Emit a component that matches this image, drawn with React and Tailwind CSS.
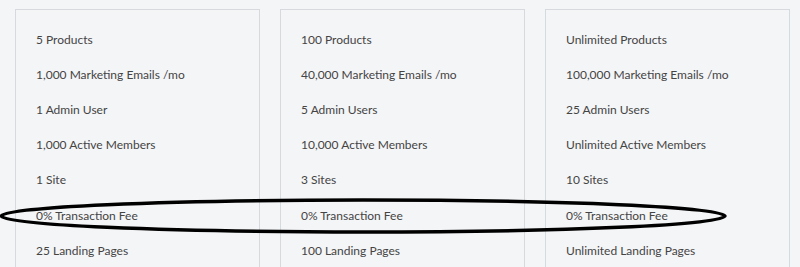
export default function App() {
  const plans = [
    ["5 Products", "1,000 Marketing Emails /mo", "1 Admin User", "1,000 Active Members", "1 Site", "0% Transaction Fee", "25 Landing Pages"],
    ["100 Products", "40,000 Marketing Emails /mo", "5 Admin Users", "10,000 Active Members", "3 Sites", "0% Transaction Fee", "100 Landing Pages"],
    ["Unlimited Products", "100,000 Marketing Emails /mo", "25 Admin Users", "Unlimited Active Members", "10 Sites", "0% Transaction Fee", "Unlimited Landing Pages"],
  ];
  return (
    <div className="relative w-[800px] h-[267px] overflow-hidden bg-[#f4f5f7]" style={{ fontFamily: "Lato, 'Open Sans', sans-serif" }}>
      <div className="flex gap-[20px] pl-[15px] pt-[9px]">
        {plans.map((p, i) => (
          <div key={i} className="w-[245px] h-[300px] border border-[#d6d9de] bg-[#f4f5f7] pl-[20px] pt-[12px]">
            {p.map((t, j) => (
              <div key={j} className="h-[35.2px] flex items-center text-[12px] text-[#444444]">{t}</div>
            ))}
          </div>
        ))}
      </div>
      <svg className="absolute left-0 top-0" width="800" height="267">
        <ellipse cx="363" cy="216" rx="362" ry="16" fill="none" stroke="#000" strokeWidth="3.5" />
      </svg>
    </div>
  );
}
